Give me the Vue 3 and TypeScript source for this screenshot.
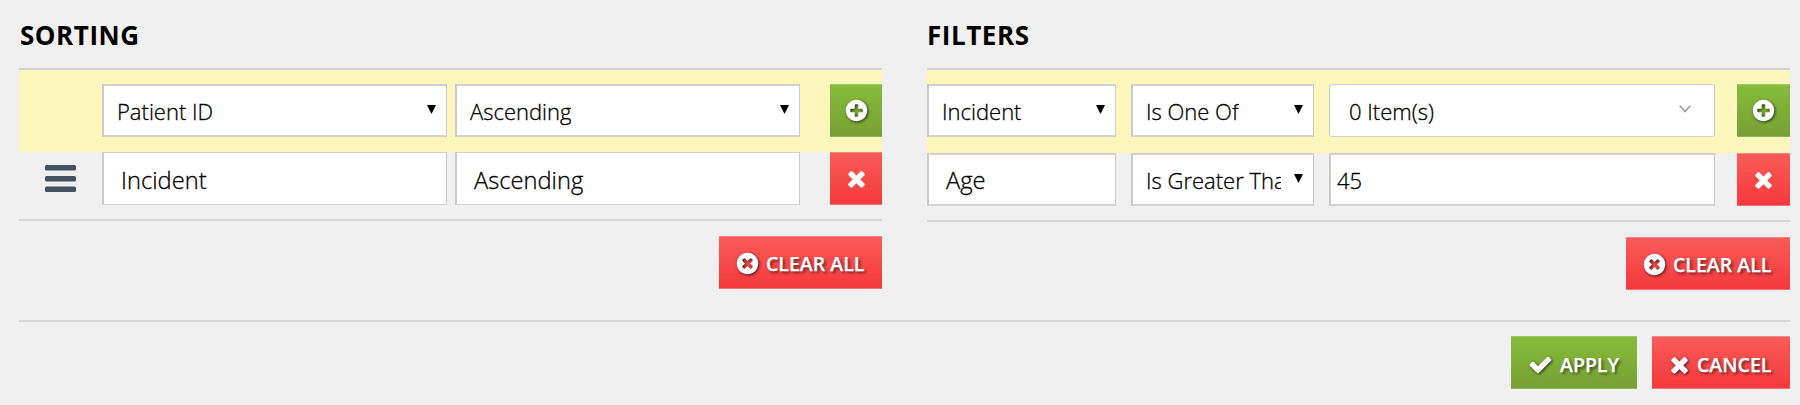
<script setup lang="ts">
import { h, type FunctionalComponent } from 'vue'

type IconName = 'plus' | 'remove' | 'times' | 'check'

const disc = 'q0 209-103 385.5t-279.5 279.5-385.5 103-385.5-103-279.5-279.5-103-385.5 103-385.5 279.5-279.5 385.5-103 385.5 103 279.5 279.5 103 385.5z'
const paths: Record<IconName, string> = {
  plus: 'M1344 960v-128q0-26-19-45t-45-19h-256v-256q0-26-19-45t-45-19h-128q-26 0-45 19t-19 45v256h-256q-26 0-45 19t-19 45v128q0 26 19 45t45 19h256v256q0 26 19 45t45 19h128q26 0 45-19t19-45v-256h256q26 0 45-19t19-45zm320-64' + disc,
  remove: 'M1277 1122q0-26-19-45l-181-181 181-181q19-19 19-45 0-27-19-46l-90-90q-19-19-46-19-26 0-45 19l-181 181-181-181q-19-19-45-19-27 0-46 19l-90 90q-19 19-19 46 0 26 19 45l181 181-181 181q-19 19-19 45 0 27 19 46l90 90q19 19 46 19 26 0 45-19l181-181 181 181q19 19 45 19 27 0 46-19l90-90q19-19 19-46zm387-226' + disc,
  times: 'M1490 1322q0 40-28 68l-136 136q-28 28-68 28t-68-28l-294-294-294 294q-28 28-68 28t-68-28l-136-136q-28-28-28-68t28-68l294-294-294-294q-28-28-28-68t28-68l136-136q28-28 68-28t68 28l294 294 294-294q28-28 68-28t68 28l136 136q28 28 28 68t-28 68l-294 294 294 294q28 28 28 68z',
  check: 'M1671 566q0 40-28 68l-724 724-136 136q-28 28-68 28t-68-28l-136-136-362-362q-28-28-28-68t28-68l136-136q28-28 68-28t68 28l294 295 656-657q28-28 68-28t68 28l136 136q28 28 28 68z',
}

const Icon: FunctionalComponent<{ name: IconName }> = (props) =>
  h('svg', { viewBox: '0 0 1792 1792' }, [h('path', { d: paths[props.name], fill: '#fff' })])
Icon.props = ['name']

const Arrow: FunctionalComponent = () =>
  h('svg', { viewBox: '0 0 9 9' }, [h('path', { d: 'M0 0H9L4.5 9Z', fill: '#000' })])
</script>

<template>
  <main class="page">
    <div class="panels">
      <section class="panel">
        <h2 class="inset">SORTING</h2>
        <div class="row sort active">
          <span></span>
          <div class="field select"><span class="value">Patient ID</span><Arrow class="arrow" /></div>
          <div class="field select"><span class="value">Ascending</span><Arrow class="arrow" /></div>
          <button class="btn green square"><Icon name="plus" class="icon" /></button>
        </div>
        <div class="row sort second">
          <svg class="handle" viewBox="0 0 31 28">
            <rect width="31" height="5.6" rx="1.5" /><rect y="11" width="31" height="5.6" rx="1.5" /><rect y="21.4" width="31" height="5.6" rx="1.5" />
          </svg>
          <div class="field text thin"><span class="value">Incident</span></div>
          <div class="field text thin"><span class="value">Ascending</span></div>
          <button class="btn red square"><Icon name="times" class="icon plain" /></button>
        </div>
        <div class="clear">
          <button class="btn red wide"><Icon name="remove" class="icon" /><span>CLEAR ALL</span></button>
        </div>
      </section>

      <section class="panel">
        <h2>FILTERS</h2>
        <div class="row filter active tall">
          <div class="field select"><span class="value">Incident</span><Arrow class="arrow" /></div>
          <div class="field select"><span class="value">Is One Of</span><Arrow class="arrow" /></div>
          <div class="field items">
            <span class="value">0 Item(s)</span>
            <svg class="chevron" viewBox="0 0 12 8"><path d="M.7 .8L6 6.6L11.3 .8" fill="none" stroke="#8f9ba8" stroke-width="1.5" /></svg>
          </div>
          <button class="btn green square"><Icon name="plus" class="icon" /></button>
        </div>
        <div class="row filter second">
          <div class="field text"><span class="value">Age</span></div>
          <div class="field select"><span class="value">Is Greater Than</span><Arrow class="arrow" /></div>
          <div class="field number"><span class="value">45</span></div>
          <button class="btn red square"><Icon name="times" class="icon plain" /></button>
        </div>
        <div class="clear">
          <button class="btn red wide"><Icon name="remove" class="icon" /><span>CLEAR ALL</span></button>
        </div>
      </section>
    </div>

    <footer>
      <button class="btn green apply"><Icon name="check" class="icon" /><span>APPLY</span></button>
      <button class="btn red cancel"><Icon name="times" class="icon" /><span>CANCEL</span></button>
    </footer>
  </main>
</template>

<style>
body { background: #f0f0f0; }
</style>

<style scoped>
.page {
  box-sizing: border-box;
  width: 1800px;
  height: 405px;
  padding: 0 10px 0 19px;
  overflow: hidden;
  background: #f0f0f0;
  color: #111;
  font-family: "Open Sans", "Noto Sans", sans-serif;
}
.panels { display: grid; grid-template-columns: 863px 863px; column-gap: 45px; height: 320px; }
h2 {
  box-sizing: border-box;
  height: 68px;
  margin: 0;
  line-height: 70px;
  font-size: 26px;
  font-weight: 700;
  letter-spacing: .55px;
  color: #000;
}
.inset { padding-left: 1px; }
.row { display: grid; align-items: start; }
.sort { grid-template-columns: 83px 345px 8px 345px 30px 52px; }
.sort > :nth-child(3) { grid-column: 4; }
.sort > :nth-child(4) { grid-column: 6; }
.filter { grid-template-columns: 189px 183px 386px 60px; column-gap: 15px; }
.filter > :nth-child(4) { margin-left: 7px; }
.active {
  box-sizing: border-box;
  height: 84px;
  padding-top: 14px;
  border-top: 2px solid #d2d3d4;
  background: #fbf6bb;
}
.active.tall { height: 85px; }
.second { height: 67px; border-bottom: 2px solid #d6d7d8; }
.field {
  box-sizing: border-box;
  display: flex;
  align-items: center;
  height: 53px;
  overflow: hidden;
  border-style: solid;
  border-width: 2px 1px 2px 2px;
  border-color: #d0d0d0 #cacaca #d3d3d3 #cacaca;
  background: #fff;
  font-size: 22px;
  font-weight: 300;
  color: #000;
  -webkit-text-stroke: .3px #000;
}
.field .value { line-height: 30px; white-space: nowrap; }
.select { padding: 0 10px 0 13px; justify-content: space-between; }
.select .value { min-width: 0; margin-right: 13px; overflow: hidden; }
.arrow { flex: none; width: 9px; height: 9px; margin-top: -3px; }
.text { padding-left: 17px; font-size: 23.7px; }
.thin { padding-top: 2px; border-top-width: 1px; border-bottom-width: 1px; }
.items { padding: 1px 23px 0 19px; justify-content: space-between; border-radius: 3px; border-width: 1.5px; }
.chevron { width: 12px; height: 8px; margin-top: -5px; }
.number { padding-left: 6px; }
.handle { width: 31px; height: 28px; margin: 13px 0 0 26px; fill: #45515f; }
.btn {
  box-sizing: border-box;
  display: flex;
  align-items: center;
  height: 53px;
  margin: 0;
  padding: 0;
  border: 0;
  color: #fff;
  font: 600 19.5px "Open Sans", "Noto Sans", sans-serif;
  -webkit-text-stroke: .25px #fff;
  text-shadow: 2px 2px 3px rgba(0, 0, 0, .55);
}
.btn span { white-space: nowrap; }
.square { width: 53px; justify-content: center; }
.sort .square { width: 52px; }
.green { background: linear-gradient(#86bd3a, #75a034); box-shadow: inset 0 1px #9bc567, inset 0 -1px #90b45d; }
.red { background: linear-gradient(#f95c59, #f5383c); box-shadow: inset 0 1px #f78684, inset 0 -1px #f57274; }
.icon { flex: none; width: 25px; height: 25px; filter: drop-shadow(1.5px 1.5px 1.5px rgba(0, 0, 0, .7)); }
.icon.plain { filter: none; }
.clear { display: flex; justify-content: flex-end; padding-top: 15px; }
.wide { width: 163px; padding: 1px 0 0 16px; }
.filter ~ .clear .wide { width: 164px; }
.wide span { margin-left: 6px; }
footer {
  display: flex;
  justify-content: flex-end;
  gap: 15px;
  padding-top: 14px;
  border-top: 2px solid #d6d7d8;
}
.apply { width: 126px; padding: 3px 0 0 17px; }
.apply span { margin-left: 7px; }
.cancel { width: 138px; padding: 3px 0 0 15px; }
.cancel span { margin-left: 5px; }
</style>
